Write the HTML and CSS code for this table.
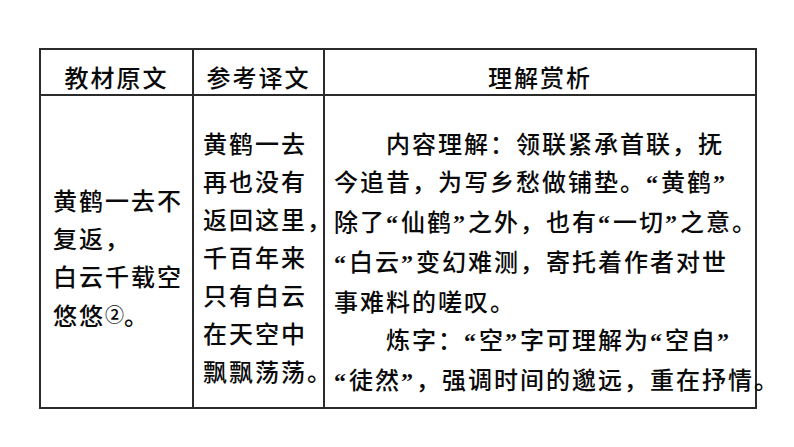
FILE: index.html
```html
<!DOCTYPE html>
<html lang="zh-CN">
<head>
<meta charset="utf-8">
<title>黄鹤楼</title>
<link rel="stylesheet" href="styles.css">
</head>
<body>
<div class="page">
  <table class="grid">
    <colgroup>
      <col class="c1">
      <col class="c2">
      <col class="c3">
    </colgroup>
    <thead>
      <tr class="head">
        <th>教材原文</th>
        <th>参考译文</th>
        <th>理解赏析</th>
      </tr>
    </thead>
    <tbody>
      <tr class="body">
        <td class="orig">黄鹤一去不<br>复返，<br>白云千载空<br>悠悠<span class="note">②</span>。</td>
        <td class="trans">黄鹤一去<br>再也没有<br>返回这里，<br>千百年来<br>只有白云<br>在天空中<br>飘飘荡荡。</td>
        <td class="appr"><span class="ind"></span>内容理解：领联紧承首联，抚<br>今追昔，为写乡愁做铺垫。<span class="q">“</span>黄鹤<span class="q">”</span><br>除了<span class="q">“</span>仙鹤<span class="q">”</span>之外，也有<span class="q">“</span>一切<span class="q">”</span>之意。<br><span class="q">“</span>白云<span class="q">”</span>变幻难测，寄托着作者对世<br>事难料的嗟叹。<br><span class="ind"></span>炼字：<span class="q">“</span>空<span class="q">”</span>字可理解为<span class="q">“</span>空自<span class="q">”</span><br><span class="q">“</span>徒然<span class="q">”</span>，强调时间的邈远，重在抒情。</td>
      </tr>
    </tbody>
  </table>
</div>
</body>
</html>
```
FILE: styles.css
```css
html, body {
  margin: 0;
  padding: 0;
  background: #ffffff;
}
.page {
  padding: 48px 0 0 39px;
}
.grid {
  border-collapse: collapse;
  table-layout: fixed;
  width: 716px;
  font-family: "Noto Sans CJK SC", sans-serif;
  font-size: 24px;
  font-weight: 500;
  letter-spacing: 2px;
  color: #0a0a0a;
}
.c1 { width: 153px; }
.c2 { width: 131px; }
.c3 { width: 432px; }
.grid th,
.grid td {
  border: 2px solid #2b2b2b;
  padding: 0;
  white-space: nowrap;
  overflow: visible;
}
.head {
  height: 46px;
}
.body {
  height: 313px;
}
.grid th {
  font-weight: 500;
  line-height: 34px;
  padding-top: 10px;
  text-align: center;
}
.grid td {
  vertical-align: top;
  line-height: 38px;
  padding-top: 28px;
  text-align: left;
}
.grid td.orig {
  padding-left: 12px;
  padding-top: 85px;
}
.grid td.trans {
  padding-left: 9px;
}
.grid td.appr {
  padding-left: 9px;
}
.ind {
  display: inline-block;
  width: 52px;
}
.q {
  font-family: "Liberation Serif", serif;
  font-weight: bold;
  letter-spacing: 3px;
}
.note {
  font-size: 19px;
  letter-spacing: 0;
  vertical-align: 3px;
}
```
